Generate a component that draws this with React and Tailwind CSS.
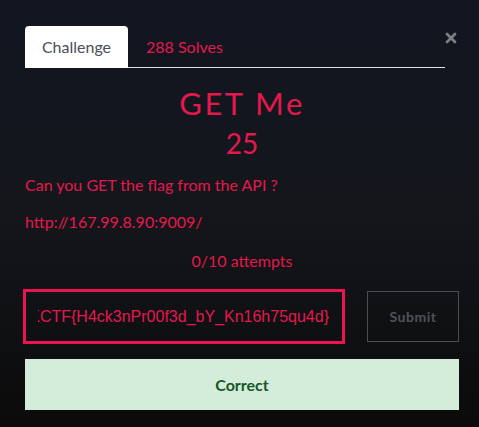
import { X } from 'lucide-react';

// ─── Challenge modal ────────────────────────────────────────────────────────

export default function App() {
  return (
    <div
      className="w-[479px] h-[427px] overflow-hidden bg-gradient-to-b from-[#111621] via-[#14161b] to-[#0b0b0b] px-[25px] pr-[20px] pt-[26px]"
      style={{ fontFamily: 'Lato, "Open Sans", sans-serif' }}
    >
      {/* Tabs */}
      <div className="relative flex items-end border-b border-[#dee2e6] w-[420px] h-[42px]">
        <div className="h-[42px] w-[103px] bg-white rounded-t-[4px] flex items-center justify-center text-[16px] text-[#495057] mb-[-1px]">
          Challenge
        </div>
        <div className="h-[41px] flex items-center pl-[18px] text-[16px] text-[#e5184d]">
          288 Solves
        </div>
        <X className="absolute right-[-14px] top-[4px] w-[16px] h-[16px] text-[#7d7f84]" strokeWidth={4} />
      </div>

      {/* Title */}
      <div className="text-center text-[#e5184d] mt-[17px] text-[31px] leading-[36px] tracking-[2.5px] font-normal">
        GET Me
      </div>
      <div className="text-center text-[#e5184d] mt-[5px] text-[28px] leading-[34px]">25</div>

      {/* Description */}
      <p className="text-[#e5184d] text-[16px] leading-[20px] mt-[15px]">Can you GET the flag from the API ?</p>
      <p className="text-[#e5184d] text-[16px] leading-[20px] mt-[17px]">http://167.99.8.90:9009/</p>
      <p className="text-center text-[#e5184d] text-[16px] leading-[20px] mt-[19px]">0/10 attempts</p>

      {/* Flag input */}
      <div className="flex gap-[22px] mt-[18px] items-center">
        <div className="w-[322px] h-[55px] ml-[-2px] border-[3px] border-[#ec1450] flex items-center pl-[12px] pr-[13px]">
          <div className="flex-1 flex justify-end overflow-hidden whitespace-nowrap">
            <span
              className="text-[#e5184d] text-[16px]"
              style={{ fontFamily: '"Liberation Sans", Arial, sans-serif' }}
            >
              SKCTF{'{'}H4ck3nPr00f3d_bY_Kn16h75qu4d{'}'}
            </span>
          </div>
        </div>
        <button className="w-[92px] h-[51px] border border-[#4b4c50] text-[#4f5257] font-bold text-[14px] tracking-[0.5px]">
          Submit
        </button>
      </div>

      {/* Result */}
      <div className="mt-[15px] h-[51px] bg-[#d4edda] flex items-center justify-center text-[#155724] font-bold text-[16px]">
        Correct
      </div>
    </div>
  );
}
